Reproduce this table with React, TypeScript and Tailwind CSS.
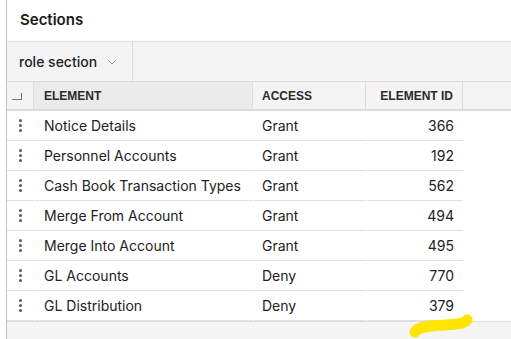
import { ChevronDown } from "lucide-react"

const rows = [
  { name: "Notice Details", access: "Grant", id: 366 },
  { name: "Personnel Accounts", access: "Grant", id: 192 },
  { name: "Cash Book Transaction Types", access: "Grant", id: 562 },
  { name: "Merge From Account", access: "Grant", id: 494 },
  { name: "Merge Into Account", access: "Grant", id: 495 },
  { name: "GL Accounts", access: "Deny", id: 770 },
  { name: "GL Distribution", access: "Deny", id: 379 },
]

function Dots() {
  return (
    <div className="flex flex-col gap-[2px] items-center">
      <span className="w-[3px] h-[3px] rounded-full bg-[#5a5a5a]" />
      <span className="w-[3px] h-[3px] rounded-full bg-[#5a5a5a]" />
      <span className="w-[3px] h-[3px] rounded-full bg-[#5a5a5a]" />
    </div>
  )
}

export default function App() {
  return (
    <div className="relative w-[511px] h-[339px] overflow-hidden bg-white pl-[6px] font-['Inter',sans-serif] text-[#222]">
      <div className="flex flex-col h-full border-l border-[#c4c4c4]">
        <div className="h-[41px] flex items-center pl-[13px] text-[15px] font-semibold text-[#1a1a1a]">Sections</div>

        <div className="h-[40px] flex bg-[#f4f4f4] border-t border-[#dcdcdc]">
          <div className="w-[126px] border-r border-[#dcdcdc] flex items-center pl-[12px] gap-[7px] text-[14px] font-medium text-[#222]">
            role section
            <ChevronDown size={16} strokeWidth={1.1} className="text-[#777] mt-[1px]" />
          </div>
        </div>

        <div className="h-[30px] grid grid-cols-[27px_219px_113px_97px_1fr] bg-[#f4f4f4] border-t border-b-2 border-[#dcdcdc] font-['Liberation_Sans',sans-serif] text-[12px] font-bold text-[#2a2a2a]">
          <div className="flex items-center pl-[5px] border-r border-[#dcdcdc]">
            <span className="w-[10px] h-[7px] border-b border-r border-[#777] mt-[2px]" />
          </div>
          <div className="flex items-center pl-[10px] bg-[#ebebeb] border-r border-[#dcdcdc]">ELEMENT</div>
          <div className="flex items-center pl-[9px] border-r border-[#dcdcdc]">ACCESS</div>
          <div className="flex items-center justify-end pr-[9px] border-r border-[#dcdcdc]">ELEMENT ID</div>
          <div />
        </div>

        {rows.map((r) => (
          <div key={r.id} className="h-[30px] grid grid-cols-[27px_218px_112px_96px] gap-x-px w-[456px] text-[14px]">
            <div className="flex items-center justify-center border-b border-[#e0e0e0]">
              <Dots />
            </div>
            <div className="flex items-center pl-[9px] border-b border-[#e0e0e0]">{r.name}</div>
            <div className="flex items-center pl-[8px] border-b border-[#e0e0e0]">{r.access}</div>
            <div className="flex items-center justify-end pr-[9px] border-b border-[#e0e0e0]">{r.id}</div>
          </div>
        ))}

        <div className="flex-1 bg-[#f4f4f4] border-t border-[#dcdcdc]" />
      </div>

      <svg className="absolute left-0 top-0 pointer-events-none" width="511" height="339">
        <path d="M415 332 C 419 326, 430 326, 445 325 C 456 324, 464 324, 467 320" stroke="#ffe500" strokeWidth="11" strokeLinecap="round" fill="none" />
      </svg>
    </div>
  )
}
